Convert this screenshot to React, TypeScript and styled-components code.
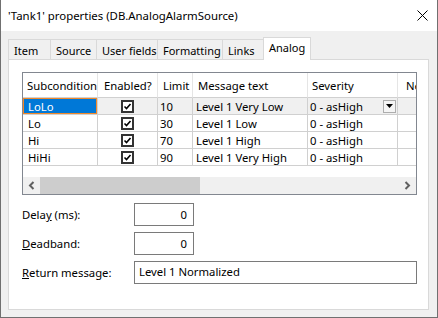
import React from 'react';
import styled, { createGlobalStyle } from 'styled-components';

const GlobalStyle = createGlobalStyle`
  html, body {
    margin: 0;
    padding: 0;
    background: #f0f0f0;
  }
  body {
    font-family: "Noto Sans", "Segoe UI", sans-serif;
    font-size: 11.3px;
    color: #000;
  }
  * {
    box-sizing: border-box;
  }
`;

const Window = styled.div`
  width: 438px;
  height: 318px;
  display: flex;
  flex-direction: column;
  background: #f0f0f0;
  border: 1px solid #707070;
  border-top: none;
`;

const TitleBar = styled.div`
  height: 31px;
  flex: none;
  display: flex;
  align-items: center;
  padding-left: 7px;
  background: #fff;
  font-size: 11.4px;
`;

const Title = styled.span`
  flex: 1;
  white-space: nowrap;
`;

const CloseIcon = styled.svg`
  margin-right: 9px;
  display: block;
`;

const Body = styled.div`
  flex: 1;
  display: flex;
  flex-direction: column;
  padding: 6px 8px 7px 7px;
`;

const TabStrip = styled.div`
  height: 22px;
  display: flex;
  align-items: flex-end;
  position: relative;
  z-index: 1;
`;

const Tab = styled.div<{ $w: number; $active?: boolean }>`
  width: ${(p) => p.$w}px;
  height: ${(p) => (p.$active ? 23 : 20)}px;
  margin-left: -1px;
  margin-bottom: ${(p) => (p.$active ? -1 : 0)}px;
  padding: ${(p) => (p.$active ? '2px' : '3px')} 0 0 5px;
  border: 1px solid #d9d9d9;
  border-bottom: none;
  background: ${(p) => (p.$active ? '#fff' : '#f0f0f0')};
  white-space: nowrap;
  line-height: 16px;
  font-size: 11px;
  &:first-child {
    margin-left: 0;
  }
`;

const Panel = styled.div`
  flex: 1;
  background: #fff;
  border: 1px solid #d9d9d9;
  padding: 12px 11px 0 13px;
`;

const ListView = styled.div`
  height: 123px;
  border: 1px solid #828790;
  display: flex;
  flex-direction: column;
  overflow: hidden;
  background: #fff;
`;

const colWidths = [75, 60, 35, 115, 90, 80];

const Row = styled.div<{ $header?: boolean }>`
  display: grid;
  grid-template-columns: ${colWidths.map((w) => `${w}px`).join(' ')};
  height: ${(p) => (p.$header ? 25 : 17)}px;
  flex: none;
`;

const HeadCell = styled.div<{ $pad: number }>`
  padding-left: ${(p) => p.$pad}px;
  border-right: 1px solid #e5e5e5;
  border-bottom: 1px solid #d0d0d0;
  display: flex;
  align-items: center;
  white-space: nowrap;
  overflow: hidden;
`;

const Cell = styled.div<{ $pad: number; $shade?: boolean; $selected?: boolean; $center?: boolean }>`
  padding-left: ${(p) => p.$pad}px;
  border-right: 1px solid #d0d0d0;
  border-bottom: 1px solid #d0d0d0;
  display: flex;
  align-items: center;
  justify-content: ${(p) => (p.$center ? 'center' : 'flex-start')};
  white-space: nowrap;
  overflow: hidden;
  background: ${(p) => (p.$selected ? '#0078d7' : p.$shade ? '#f0f0f0' : '#fff')};
  color: ${(p) => (p.$selected ? '#fff' : '#000')};
  box-shadow: ${(p) => (p.$selected ? 'inset 0 0 0 1px #f0882a' : 'none')};
`;

const DropButton = styled.div`
  margin-left: auto;
  margin-right: 1px;
  width: 13px;
  height: 13px;
  border: 1px solid #adadad;
  background: #f5f5f5;
  display: flex;
  align-items: center;
  justify-content: center;
`;

const Filler = styled.div`
  flex: 1;
`;

const HScroll = styled.div`
  height: 17px;
  flex: none;
  display: flex;
  background: #f0f0f0;
`;

const ScrollArrow = styled.div`
  width: 17px;
  display: flex;
  align-items: center;
  justify-content: center;
`;

const ScrollThumb = styled.div`
  width: 160px;
  background: #cdcdcd;
`;

const Form = styled.div`
  margin-top: 8px;
  display: grid;
  grid-template-columns: 112px 1fr;
  row-gap: 6px;
  align-items: center;
`;

const Label = styled.div`
  white-space: nowrap;
`;

const TextBox = styled.div<{ $w?: number; $right?: boolean }>`
  width: ${(p) => (p.$w ? `${p.$w}px` : 'auto')};
  height: 23px;
  border: 1px solid #7a7a7a;
  background: #fff;
  display: flex;
  align-items: center;
  justify-content: ${(p) => (p.$right ? 'flex-end' : 'flex-start')};
  padding: ${(p) => (p.$right ? '0 6px 1px 0' : '0 0 2px 4px')};
`;

const tabs = [
  { label: 'Item', w: 43 },
  { label: 'Source', w: 47 },
  { label: 'User fields', w: 62 },
  { label: 'Formatting', w: 66 },
  { label: 'Links', w: 42 },
  { label: 'Analog', w: 48, active: true },
];

const headers = [
  { title: 'Subcondition', pad: 4 },
  { title: 'Enabled?', pad: 6 },
  { title: 'Limit', pad: 5 },
  { title: 'Message text', pad: 5 },
  { title: 'Severity', pad: 4 },
  { title: 'Needs ack', pad: 8 },
];

const rows = [
  { name: 'LoLo', limit: '10', text: 'Level 1 Very Low' },
  { name: 'Lo', limit: '30', text: 'Level 1 Low' },
  { name: 'Hi', limit: '70', text: 'Level 1 High' },
  { name: 'HiHi', limit: '90', text: 'Level 1 Very High' },
];

const CheckBox = () => (
  <svg width="13" height="13" viewBox="0 0 13 13">
    <rect x="1" y="1" width="11" height="11" fill="#fff" stroke="#333" strokeWidth="2" />
    <path d="M3.5 6.5 L5.5 8.5 L9.5 4" fill="none" stroke="#000" strokeWidth="1.6" />
  </svg>
);

const Chevron = ({ dir }: { dir: 'left' | 'right' }) => (
  <svg width="7" height="9" viewBox="0 0 7 9">
    <path
      d={dir === 'left' ? 'M5.5 1 L2 4.5 L5.5 8' : 'M1.5 1 L5 4.5 L1.5 8'}
      fill="none"
      stroke="#606060"
      strokeWidth="2"
    />
  </svg>
);

export default function App() {
  return (
    <>
      <GlobalStyle />
      <Window>
        <TitleBar>
          <Title>'Tank1' properties (DB.AnalogAlarmSource)</Title>
          <CloseIcon width="11" height="11" viewBox="0 0 11 11">
            <path d="M0.5 0.5 L10.5 10.5 M10.5 0.5 L0.5 10.5" stroke="#000" strokeWidth="1" />
          </CloseIcon>
        </TitleBar>
        <Body>
          <TabStrip>
            {tabs.map((t) => (
              <Tab key={t.label} $w={t.w} $active={t.active}>
                {t.label}
              </Tab>
            ))}
          </TabStrip>
          <Panel>
            <ListView>
              <Row $header>
                {headers.map((h) => (
                  <HeadCell key={h.title} $pad={h.pad}>
                    {h.title}
                  </HeadCell>
                ))}
              </Row>
              {rows.map((r, i) => {
                const first = i === 0;
                return (
                  <Row key={r.name}>
                    <Cell $pad={5} $selected={first}>
                      {r.name}
                    </Cell>
                    <Cell $pad={0} $center $shade={first}>
                      <CheckBox />
                    </Cell>
                    <Cell $pad={2} $shade={first}>
                      {r.limit}
                    </Cell>
                    <Cell $pad={3} $shade={first}>
                      {r.text}
                    </Cell>
                    <Cell $pad={2} $shade={first}>
                      0 - asHigh
                      {first && (
                        <DropButton>
                          <svg width="7" height="4" viewBox="0 0 7 4">
                            <path d="M0 0 H7 L3.5 4 Z" fill="#000" />
                          </svg>
                        </DropButton>
                      )}
                    </Cell>
                    <Cell $pad={2} $shade={first} />
                  </Row>
                );
              })}
              <Filler />
              <HScroll>
                <ScrollArrow>
                  <Chevron dir="left" />
                </ScrollArrow>
                <ScrollThumb />
                <Filler />
                <ScrollArrow>
                  <Chevron dir="right" />
                </ScrollArrow>
              </HScroll>
            </ListView>
            <Form>
              <Label>
                Dela<u>y</u> (ms):
              </Label>
              <TextBox $w={60} $right>
                0
              </TextBox>
              <Label>
                <u>D</u>eadband:
              </Label>
              <TextBox $w={60} $right>
                0
              </TextBox>
              <Label>
                <u>R</u>eturn message:
              </Label>
              <TextBox>Level 1 Normalized</TextBox>
            </Form>
          </Panel>
        </Body>
      </Window>
    </>
  );
}
